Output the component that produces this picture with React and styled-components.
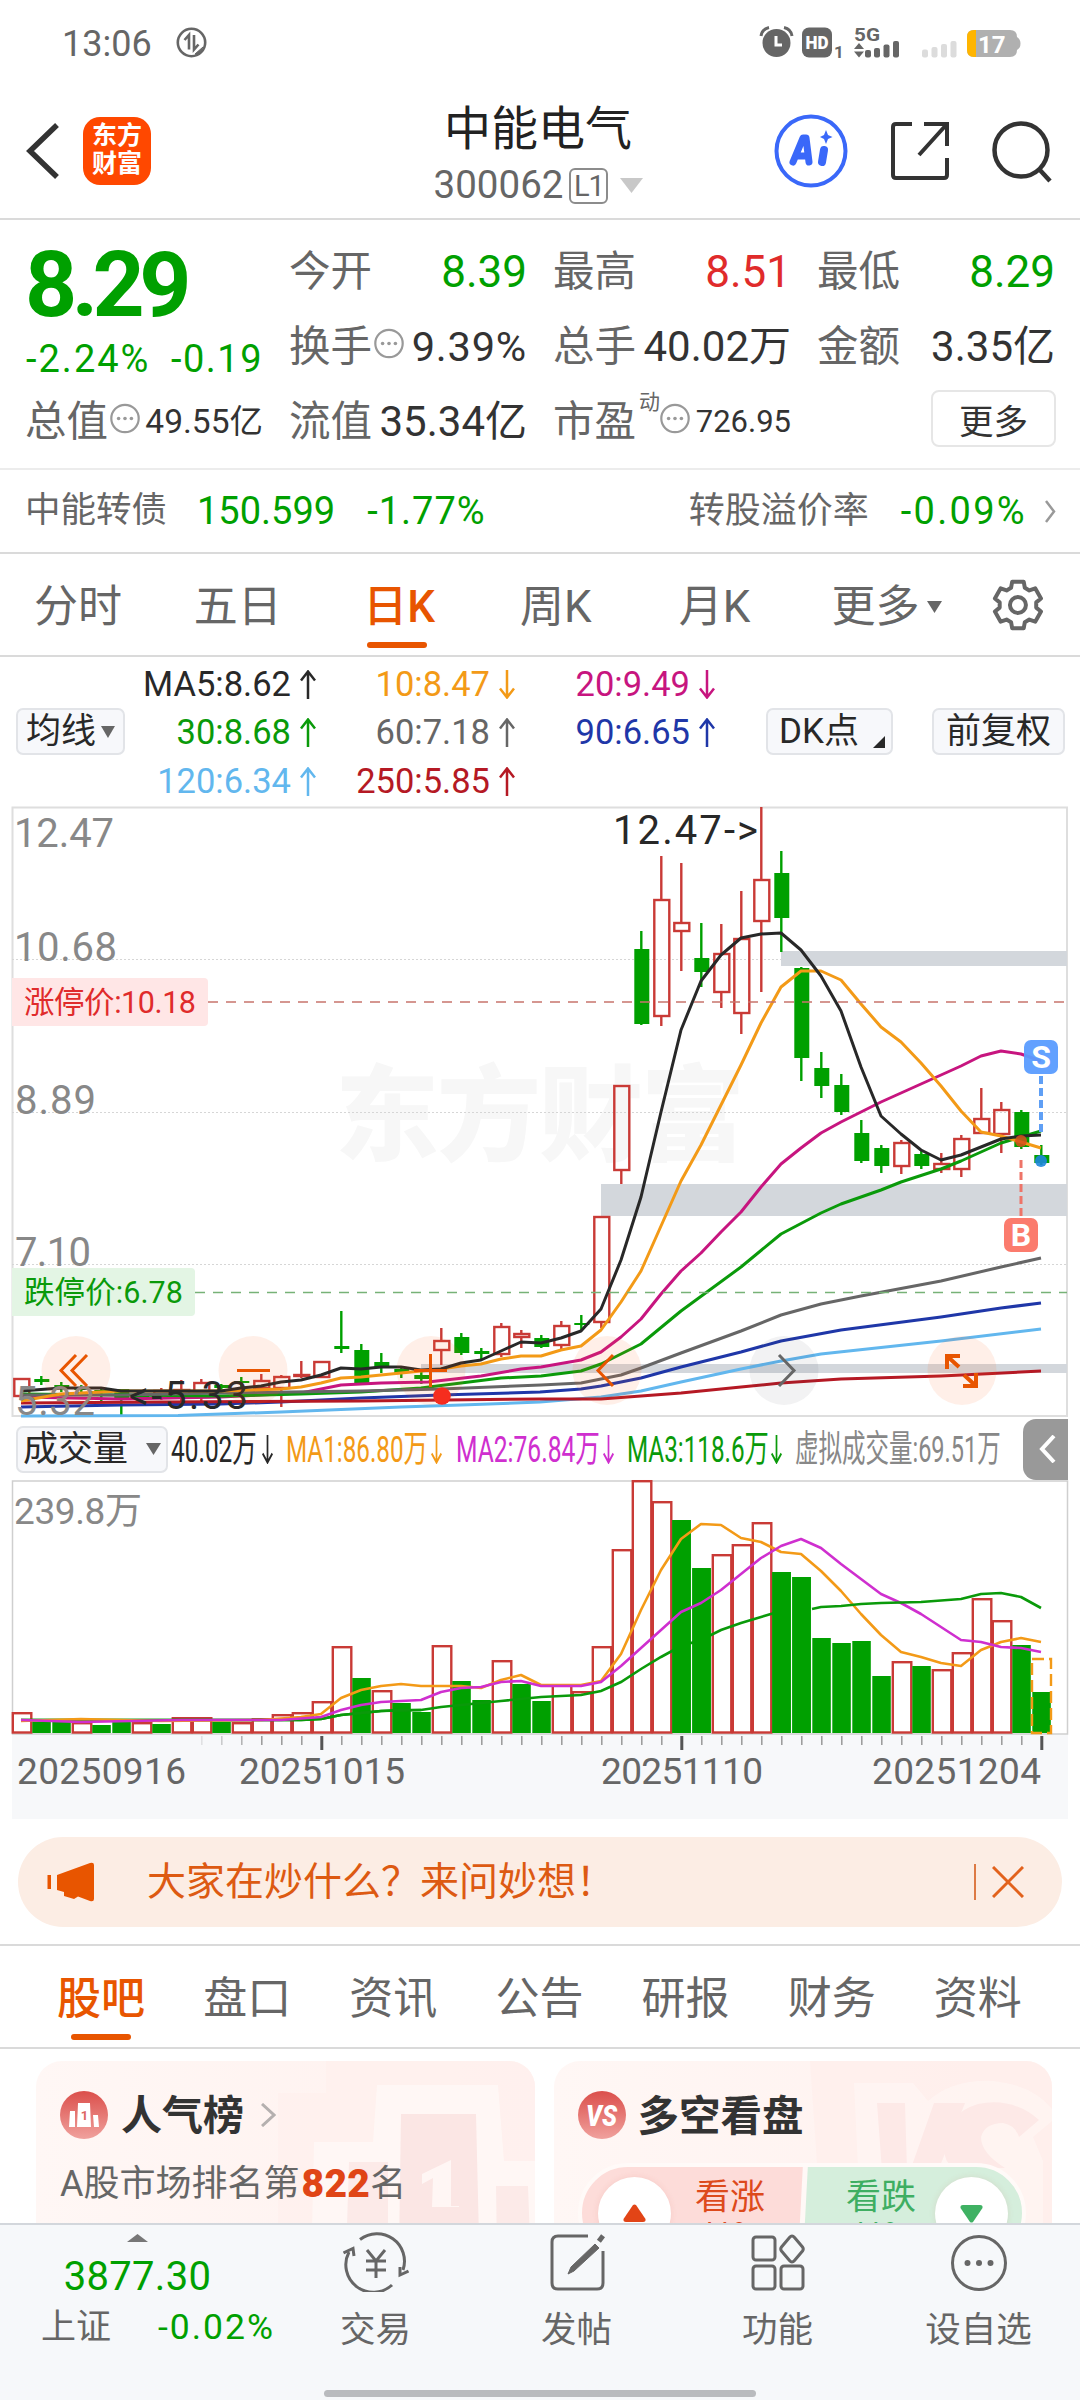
import styled, { createGlobalStyle } from "styled-components";

const GlobalStyle = createGlobalStyle`
  * { box-sizing: border-box; }
  body {
    margin: 0;
    background: #fff;
    font-family: Roboto, "Noto Sans CJK SC", sans-serif;
    line-height: 1;
    color: #333;
  }
`;

const GREEN = "#00a000";
const INK_GREEN = "#0a9a0a";
const RED = "#e02b2b";
const CANDLE_RED = "#c93a36";
const GREY = "#666";
const ORANGE = "#e85500";

const Screen = styled.div`
  width: 1080px;
  height: 2400px;
  display: flex;
  flex-direction: column;
  overflow: hidden;
  white-space: nowrap;
  background: #fff;
`;

const Txt = styled.span`
  font-size: ${(p) => p.$size}px;
  color: ${(p) => p.$color || "inherit"};
  font-weight: ${(p) => p.$weight || 400};
  letter-spacing: ${(p) => p.$ls || 0}px;
  margin: ${(p) => p.$m || 0};
`;

/* ---------- status bar ---------- */

const StatusBar = styled.div`
  height: 84px;
  padding: 0 58px 0 62px;
  display: flex;
  align-items: center;
  justify-content: space-between;
  color: #666;

  svg {
    overflow: visible;
  }
`;

const StatusLeft = styled.div`
  display: flex;
  align-items: center;
  gap: 24px;
  padding-top: 4px;

  svg {
    margin-top: -4px;
  }
`;

/* ---------- header ---------- */

const Header = styled.header`
  height: 136px;
  padding: 0 28px 0 26px;
  display: grid;
  grid-template-columns: 300px 1fr 282px;
  align-items: center;
  border-bottom: 2px solid #dadada;
`;

const HeaderLeft = styled.div`
  display: flex;
  align-items: center;
  gap: 23px;
`;

const Logo = styled.div`
  width: 68px;
  height: 68px;
  border-radius: 17px;
  background: #ff4800;
  color: #fff;
  font-size: 25px;
  font-weight: 700;
  line-height: 28px;
  text-align: center;
  padding-top: 5px;
  white-space: normal;
`;

const HeaderTitle = styled.div`
  display: flex;
  flex-direction: column;
  align-items: center;
  gap: 14px;
  padding-right: 20px;
  padding-top: 8px;
`;

const CodeRow = styled.div`
  display: flex;
  align-items: center;
  gap: 6px;
  margin-left: 1px;
  color: #666;
`;

const LevelTag = styled.span`
  width: 39px;
  height: 36px;
  border: 2px solid #8c8c8c;
  border-radius: 6px;
  font-size: 29px;
  line-height: 33px;
  text-align: center;
  letter-spacing: -1px;
`;

const HeaderRight = styled.div`
  display: flex;
  align-items: center;
  justify-content: flex-end;
  gap: 42px;
`;

/* ---------- quote ---------- */

const Quote = styled.section`
  height: 250px;
  padding: 14px 24px 0 25px;
  display: grid;
  grid-template-columns: repeat(4, 238px);
  grid-template-rows: repeat(3, 75px);
  column-gap: 26px;
  border-bottom: 2px solid #ececec;
`;

const PriceBlock = styled.div`
  grid-row: span 2;
  color: ${GREEN};
  display: flex;
  flex-direction: column;
  padding-top: 6px;
  gap: 5px;
`;

const ChangeRow = styled.div`
  display: flex;
  justify-content: space-between;
  padding: 4px 0 0 1px;
`;

const Cell = styled.div`
  display: flex;
  align-items: center;
  justify-content: space-between;
  color: ${(p) => p.$color || "#333"};
`;

const Label = styled.span`
  display: flex;
  align-items: center;
  gap: 3px;
  font-size: 41.5px;
  color: #666;

  svg {
    margin: -7px 0 0 -1px;
  }
`;

const Sup = styled.sup`
  font-size: 21px;
  align-self: flex-start;
  margin: -9px -2px 0 0;
  line-height: 1;
`;

const MoreButton = styled.button`
  justify-self: end;
  align-self: center;
  width: 125px;
  height: 57px;
  margin: -6px -1px 0 0;
  border: 2px solid #e6e6e6;
  border-radius: 8px;
  background: #fff;
  font: 34.5px Roboto, "Noto Sans CJK SC", sans-serif;
  color: #333;
  padding: 0;
`;

const BondRow = styled.div`
  height: 84px;
  padding: 0 24px 0 25px;
  display: flex;
  align-items: center;
  border-bottom: 2px solid #dadada;
  color: #666;
`;

const Spacer = styled.div`
  flex: 1;
`;

/* ---------- tabs ---------- */

const PeriodTabs = styled.nav`
  height: 103px;
  display: flex;
  align-items: center;
  padding: 0 35px 0 34px;
  border-bottom: 2px solid #dadada;
`;

const Tab = styled.div`
  position: relative;
  width: ${(p) => p.$w}px;
  padding-top: 4px;
  display: flex;
  align-items: center;
  gap: ${(p) => p.$gap || 8}px;
  font-size: 44px;
  font-weight: ${(p) => (p.$active ? 500 : 400)};
  color: ${(p) => (p.$active ? ORANGE : GREY)};

  &::after {
    content: "";
    display: ${(p) => (p.$active ? "block" : "none")};
    position: absolute;
    left: ${(p) => p.$bar || 0}px;
    bottom: -19px;
    width: 60px;
    height: 6px;
    border-radius: 3px;
    background: ${ORANGE};
  }
`;

/* ---------- moving averages ---------- */

const MaBar = styled.div`
  height: 149px;
  padding-left: 16px;
  display: flex;
  align-items: center;
`;

const Chip = styled.button`
  position: relative;
  width: ${(p) => p.$w}px;
  height: 47px;
  margin-left: ${(p) => p.$ml || 0}px;
  padding: 0 ${(p) => p.$px || 8}px;
  display: flex;
  align-items: center;
  justify-content: ${(p) => p.$justify || "center"};
  gap: 5px;
  border: 2px solid #e2e4e8;
  border-radius: 7px;
  background: #f7f8fb;
  color: #282828;
  font: 35px Roboto, "Noto Sans CJK SC", sans-serif;
  line-height: 1;
  white-space: nowrap;
`;

const Corner = styled.span`
  position: absolute;
  right: 6px;
  bottom: 5px;
  border-left: 12px solid transparent;
  border-bottom: 12px solid #282828;
`;

const MaGrid = styled.div`
  display: grid;
  grid-template-columns: 191px 199px 200px;
  grid-auto-rows: 48.5px;
  padding-top: 2px;
`;

const MaItem = styled.div`
  display: flex;
  align-items: center;
  justify-content: flex-end;
  gap: 9px;
  font-size: 34.5px;
  color: ${(p) => p.$color};

  svg {
    flex: none;
  }
`;

const Chart = styled.svg`
  display: block;
  flex: none;
  overflow: visible;
`;

const VolumeBar = styled.div`
  height: 62px;
  padding: 0 12px 0 16px;
  display: flex;
  align-items: center;
`;

const VolumeItem = styled.div`
  display: flex;
  align-items: center;
  width: ${(p) => p.$w}px;
  gap: 7px;
  color: ${(p) => p.$color};
`;

const Narrow = styled.span`
  width: ${(p) => p.$w}px;
  font-size: 37px;

  span {
    display: inline-block;
    transform: scaleX(${(p) => p.$scale});
    transform-origin: left center;
  }
`;

const Drawer = styled.button`
  width: 45px;
  height: 61px;
  border: 0;
  padding: 0 0 0 3px;
  border-radius: 13px 0 0 13px;
  background: #999;
  display: flex;
  align-items: center;
  justify-content: center;
`;

/* ---------- banner ---------- */

const BannerWrap = styled.div`
  height: 126px;
  padding: 17px 18px 0;
  border-bottom: 2px solid #dadada;
`;

const Banner = styled.div`
  height: 90px;
  border-radius: 45px;
  background: #fcede4;
  color: #dd5a12;
  display: flex;
  align-items: center;
  padding: 0 38px 0 29px;
`;

const Divider = styled.span`
  width: 2px;
  height: 36px;
  margin-right: 16px;
  background: #dd7a45;
`;

const InfoTabs = styled.nav`
  height: 103px;
  display: flex;
  align-items: center;
  padding: 1px 0 0 57px;
  border-bottom: 2px solid #dadada;
`;

/* ---------- cards ---------- */

const Cards = styled.section`
  flex: 1;
  min-height: 0;
  overflow: hidden;
  padding: 12px 28px 0 36px;
  display: flex;
  gap: 19px;
`;

const Card = styled.article`
  position: relative;
  width: 499px;
  height: 260px;
  border-radius: 26px;
  padding: 30px 24px 0;
  overflow: hidden;
  background: linear-gradient(90deg, #fff7f5, #fff1ee);
`;

const CardArt = styled.svg`
  position: absolute;
  right: 0;
  top: 0;
`;

const CardTitle = styled.div`
  position: relative;
  height: 48px;
  display: flex;
  align-items: center;
  font-size: 41px;
  font-weight: 700;
  color: #333;
`;

const RankLine = styled.div`
  position: relative;
  display: flex;
  align-items: center;
  margin-top: 25px;
  height: 40px;
  font-size: 36px;
  color: #666;
`;

const VotePill = styled.div`
  position: relative;
  width: 448px;
  height: 100px;
  margin: 24px 0 0 0;
  border: 4px solid #fffaf8;
  border-radius: 50px;
  overflow: hidden;
  display: flex;
  align-items: center;
  padding: 0 14px 0 16px;
  background: linear-gradient(93deg, #fddcd9 0 220px, #fff8f6 221px 225px, #d5eedc 226px);
`;

const VoteDot = styled.span`
  width: 73px;
  height: 73px;
  border-radius: 50%;
  background: #fff;
  display: flex;
  align-items: center;
  justify-content: center;
  box-shadow: 0 0 6px rgba(200, 90, 70, 0.12);
`;

const VoteText = styled.span`
  width: 71px;
  margin: 8px 0 0 ${(p) => p.$ml}px;
  display: flex;
  flex-direction: column;
  gap: 2px;
  font-size: 35px;
  line-height: 36px;
  text-align: center;
  color: ${(p) => p.$color};
`;

/* ---------- bottom nav ---------- */

const BottomNav = styled.footer`
  height: 177px;
  background: #f6f8fa;
  border-top: 2px solid #d3d7dc;
  display: flex;
  flex-direction: column;
  align-items: center;
  justify-content: space-between;
  padding-bottom: 3px;
`;

const NavRow = styled.div`
  width: 1080px;
  height: 130px;
  display: flex;
`;

const IndexBlock = styled.div`
  width: 275px;
  padding-top: 9px;
  display: flex;
  flex-direction: column;
  align-items: center;
  color: ${GREEN};
`;

const IndexRow = styled.div`
  width: 234px;
  margin: 13px 0 0 41px;
  align-self: flex-start;
  display: flex;
  align-items: center;
  justify-content: space-between;
`;

const NavItem = styled.div`
  width: 201px;
  padding-top: 7px;
  display: flex;
  flex-direction: column;
  align-items: center;
  gap: 21px;
  font-size: 35.5px;
  color: #666;
`;

const HomeIndicator = styled.div`
  width: 432px;
  height: 7px;
  border-radius: 4px;
  background: #b9bbbe;
`;

/* ---------- data ---------- */

const MA_LIST = [
  { text: "MA5:8.62", color: "#282828", up: true },
  { text: "10:8.47", color: "#f39a17", up: false },
  { text: "20:9.49", color: "#c7157f", up: false },
  { text: "30:8.68", color: INK_GREEN, up: true },
  { text: "60:7.18", color: "#666", up: true },
  { text: "90:6.65", color: "#1f37a8", up: true },
  { text: "120:6.34", color: "#62b7ee", up: true },
  { text: "250:5.85", color: "#b51924", up: true },
];

// [up, bodyTop, bodyBottom, high, low]
const CANDLES = [
  [1, 1379, 1396, 1379, 1396], [0, 1379, 1382, 1376, 1385], [0, 1385, 1389, 1382, 1392],
  [0, 1387, 1390, 1385, 1392], [0, 1390, 1393, 1388, 1402], [0, 1389, 1400, 1389, 1415],
  [0, 1395, 1398, 1392, 1402], [1, 1391, 1394, 1388, 1400], [1, 1390, 1396, 1380, 1402],
  [1, 1383, 1397, 1379, 1402], [0, 1385, 1388, 1384, 1390], [0, 1381, 1383, 1377, 1388],
  [1, 1381, 1388, 1374, 1390], [1, 1377, 1388, 1375, 1407], [1, 1375, 1376, 1361, 1378],
  [1, 1362, 1377, 1361, 1377], [0, 1346, 1349, 1311, 1353], [0, 1350, 1384, 1344, 1384],
  [0, 1362, 1367, 1353, 1373], [0, 1369, 1373, 1366, 1378], [0, 1375, 1379, 1371, 1384],
  [1, 1341, 1350, 1328, 1365], [0, 1337, 1353, 1333, 1355], [0, 1351, 1354, 1348, 1360],
  [1, 1327, 1354, 1323, 1357], [1, 1334, 1337, 1330, 1348], [0, 1338, 1347, 1335, 1348],
  [1, 1326, 1345, 1321, 1349], [0, 1323, 1325, 1315, 1330], [1, 1217, 1322, 1216, 1328],
  [1, 1086, 1170, 1086, 1184], [0, 949, 1024, 931, 1025], [1, 900, 1016, 856, 1026],
  [1, 923, 931, 863, 971], [0, 958, 972, 923, 987], [1, 954, 992, 924, 1008],
  [1, 939, 1013, 891, 1034], [1, 880, 921, 807, 992], [0, 873, 918, 851, 952],
  [0, 968, 1058, 967, 1081], [0, 1068, 1086, 1052, 1098], [0, 1085, 1112, 1074, 1115],
  [0, 1133, 1161, 1120, 1163], [0, 1148, 1166, 1145, 1173], [1, 1143, 1166, 1140, 1174],
  [0, 1154, 1166, 1151, 1169], [1, 1164, 1169, 1153, 1173], [1, 1139, 1169, 1135, 1177],
  [1, 1119, 1133, 1088, 1133], [1, 1110, 1134, 1102, 1153], [0, 1112, 1147, 1110, 1149],
  [0, 1155, 1163, 1145, 1165],
];

const PRICE_LINES = [
  ["#62b7ee", "21,1416 178,1415.5 281,1412 401,1407 461,1405 540,1402 601,1397 641,1391 681,1382 741,1369 781,1361 821,1354 941,1341 1041,1329"],
  ["#1f37a8", "21,1407 121,1405 221,1404 281,1402 361,1398 441,1395 540,1392 581,1389 601,1386 641,1378 681,1367 741,1352 781,1341 841,1330 941,1317 1001,1308 1041,1303"],
  ["#b51924", "21,1403 161,1402 361,1401 540,1399 601,1399 641,1396 681,1393 741,1387 781,1383 841,1379 941,1376 1041,1371"],
  ["#c7157f", "21,1397 121,1399 221,1397 301,1393 341,1385 381,1383 428,1382 481,1376 521,1369 541,1367 581,1360 601,1352 621,1337 641,1319 661,1294 681,1271 701,1253 721,1232 741,1212 761,1187 781,1164 801,1148 821,1133 841,1122 861,1112 881,1102 901,1093 921,1084 941,1075 961,1066 981,1056 1001,1051 1021,1054 1041,1061"],
  [INK_GREEN, "21,1394 221,1396 301,1394 361,1392 421,1388 461,1383 501,1378 541,1376 581,1371 601,1364 641,1344 681,1311 741,1267 781,1234 821,1213 841,1204 881,1190 901,1182 941,1169 961,1161 1001,1143 1021,1137 1041,1131"],
  ["#666", "21,1395 121,1395 221,1393 361,1391 441,1389 541,1385 581,1383 621,1375 641,1368 681,1353 741,1331 781,1315 821,1304 861,1296 941,1281 1001,1267 1041,1258"],
  ["#f39a17", "21,1401 61,1394 121,1391 221,1391 281,1389 301,1387 321,1383 341,1378 361,1377 381,1375 401,1373 421,1371 441,1369 461,1366 481,1364 501,1359 521,1356 541,1356 561,1350 581,1346 601,1330 621,1302 641,1271 661,1226 681,1181 701,1145 721,1105 741,1065 761,1023 781,987 801,971 821,971 841,980 861,1004 881,1027 901,1042 921,1063 941,1086 961,1111 981,1132 1001,1136 1021,1142 1041,1148"],
  ["#282828", "21,1391 61,1388 101,1388 121,1391 221,1391 241,1388 261,1386 281,1382 301,1380 321,1375 341,1368 361,1369 381,1367 401,1367 421,1370 441,1369 461,1363 481,1360 501,1351 521,1342 541,1343 561,1338 581,1331 601,1309 621,1260 641,1197 661,1112 681,1030 701,981 721,955 741,938 761,934 781,933 801,950 821,976 841,1011 861,1067 881,1116 901,1134 921,1150 941,1160 961,1155 981,1147 1001,1139 1021,1136 1041,1135"],
];

// [up, top]
const VOLUMES = [
  [1, 1712], [0, 1722], [0, 1722], [1, 1722], [0, 1725], [0, 1722], [1, 1722], [0, 1724],
  [1, 1717], [1, 1717], [0, 1722], [1, 1722], [1, 1718], [1, 1714], [1, 1712], [1, 1701],
  [1, 1646], [0, 1678], [1, 1690], [0, 1703], [0, 1712], [1, 1645], [0, 1681], [0, 1700],
  [1, 1660], [0, 1684], [0, 1701], [1, 1684], [1, 1691], [1, 1646], [1, 1549], [1, 1480],
  [1, 1501], [0, 1520], [0, 1568], [1, 1554], [1, 1544], [1, 1522], [0, 1572], [0, 1577],
  [0, 1638], [0, 1643], [0, 1641], [0, 1676], [1, 1661], [0, 1666], [1, 1669], [1, 1652],
  [1, 1598], [1, 1620], [0, 1645], [0, 1692],
];

const VOL_LINE_BACK = "21,1720 221,1720 301,1720 321,1719 341,1715 361,1713 381,1711 401,1710 421,1710 441,1707 461,1705 501,1701 541,1697 581,1695 601,1691 621,1682 641,1669 661,1657 681,1646 701,1640 721,1630 741,1623 761,1617 781,1611";

const VOL_LINES = [
  [INK_GREEN, "21,1720 301,1720 321,1719 341,1715 381,1711 421,1710"],
  ["#f39a17", "21,1721 81,1719 161,1721 261,1720 301,1717 321,1714 341,1698 361,1690 381,1686 401,1684 421,1686 461,1686 481,1688 501,1680 521,1675 541,1685 581,1685 601,1681 621,1654 641,1610 661,1570 681,1539 701,1524 721,1525 741,1538 761,1542 781,1552 801,1554 821,1571 841,1591 861,1614 881,1635 901,1652 921,1657 941,1663 961,1666 981,1650 1001,1642 1021,1638 1041,1642"],
  ["#cf2fcf", "21,1720 81,1722 181,1720 281,1720 321,1717 341,1710 361,1705 381,1702 401,1701 421,1700 441,1692 461,1688 481,1687 501,1682 521,1681 541,1686 581,1686 601,1682 621,1666 641,1648 661,1630 681,1612 701,1603 721,1590 741,1574 761,1558 781,1546 801,1539 821,1548 841,1564 861,1579 881,1594 901,1603 921,1614 941,1627 961,1640 981,1642 1001,1647 1021,1648 1041,1652"],
  [INK_GREEN, "812,1609 821,1607 841,1606 861,1604 881,1603 921,1602 961,1599 981,1594 1001,1593 1021,1597 1041,1608"],
];

const candleX = (i) => 21.3 + i * 20;

/* ---------- icons ---------- */

const Arrow = ({ up, w = 16 }) => (
  <svg width={w} height="29" viewBox="0 0 16 29" preserveAspectRatio="none" fill="none" stroke="currentColor" strokeWidth="2.5">
    <path d={up ? "M8 29V1.500M1 10.500L8 1.500L15 10.500" : "M8 0V27.500M1 18.500L8 27.500L15 18.500"} />
  </svg>
);

const Caret = ({ w = 15, h = 12, color = GREY }) => (
  <svg width={w} height={h} viewBox="0 0 14 11" preserveAspectRatio="none">
    <path d="M0 0H14L7 11Z" fill={color} />
  </svg>
);

const Chevron = ({ w = 11, h = 23, color = "#999", sw = 2.5, left }) => (
  <svg width={w} height={h} viewBox={`0 0 ${w} ${h}`} fill="none" stroke={color} strokeWidth={sw}>
    <path d={left ? `M${w - 2} 1L3 ${h / 2}L${w - 2} ${h - 1}` : `M1 1L${w - 2} ${h / 2}L1 ${h - 1}`} />
  </svg>
);

const Dots = () => (
  <svg width="30" height="31" viewBox="0 0 30 31">
    <circle cx="15" cy="15.5" r="13.7" fill="none" stroke="#999" strokeWidth="2.2" />
    <circle cx="8.6" cy="15.5" r="1.8" fill="#999" />
    <circle cx="15" cy="15.5" r="1.8" fill="#999" />
    <circle cx="21.4" cy="15.5" r="1.8" fill="#999" />
  </svg>
);

const StatusIcons = () => (
  <svg width="264" height="34" viewBox="757 25 264 34">
    <g fill="#666">
      <circle cx="775.5" cy="43" r="14" />
      <path d="M760 36Q761 29 768 27.500M791 36Q790 29 783 27.500" stroke="#666" strokeWidth="3" fill="none" />
      <path d="M775 36V45H781" stroke="#fff" strokeWidth="3" fill="none" />
      <rect x="801" y="27.500" width="30" height="30" rx="7" />
      <text x="816" y="49" textAnchor="middle" fontSize="19" fontWeight="900" fill="#fff" textLength="23" lengthAdjust="spacingAndGlyphs">HD</text>
      <text x="833" y="57.500" fontSize="17" fontWeight="700">1</text>
      <text x="853" y="41" fontSize="19" fontWeight="700" textLength="26" lengthAdjust="spacingAndGlyphs">5G</text>
      <path d="M858 43L863 49H853ZM858 57.500L863 51.500H853Z" />
      <rect x="864" y="50" width="6" height="7.500" rx="2" />
      <rect x="873" y="48" width="6" height="9.500" rx="2" />
      <rect x="882.500" y="44.500" width="6" height="13" rx="2" />
      <rect x="892" y="41" width="6" height="16.500" rx="2" />
    </g>
    <g fill="#dcdcdc">
      <rect x="921" y="49.500" width="6" height="8" rx="2" />
      <rect x="930.500" y="47" width="6" height="10.500" rx="2" />
      <rect x="940" y="44" width="6" height="13.500" rx="2" />
      <rect x="949.500" y="41" width="6" height="16.500" rx="2" />
    </g>
    <path d="M973 30H1009Q1016 30 1016 37Q1019.500 39 1019.500 43.500Q1019.500 48 1016 50Q1016 57 1009 57H973Q966 57 966 50V37Q966 30 973 30Z" fill="#b0b0b0" />
    <path d="M975 30H973Q966 30 966 37V50Q966 57 973 57H975Z" fill="#ffb500" />
    <text x="977" y="53" fontSize="24" fontWeight="700" fill="#fff">17</text>
  </svg>
);

const NfcIcon = () => (
  <svg width="31" height="31" viewBox="0 0 31 31" fill="none" stroke="#666">
    <circle cx="15.500" cy="15.500" r="13.700" strokeWidth="2.600" />
    <path d="M8.500 13L13 8V22.500M18 8V22.500L22.500 17.500" strokeWidth="2.600" />
    <path d="M19 27L27 20L22 28Z" fill="#666" strokeWidth="1" />
  </svg>
);

const AiIcon = () => (
  <svg width="74" height="74" viewBox="0 0 74 74">
    <circle cx="37" cy="37" r="34.500" fill="#fff" stroke="#3a68f9" strokeWidth="4" />
    <g fill="none" stroke="#3a68f9" strokeLinecap="round" strokeLinejoin="round">
      <path d="M19 48L29 24H32L35 48M23 42H34" strokeWidth="7" />
      <path d="M50 36L48 48" strokeWidth="8" />
    </g>
    <path d="M52 16L54 21L58.500 23L54 25L52 30L50 25L46 23L50 21Z" fill="#3a68f9" />
  </svg>
);

const ShareIcon = () => (
  <svg width="60" height="60" viewBox="0 0 60 60" fill="none" stroke="#333" strokeWidth="4">
    <path d="M22 3H6Q3 3 3 6V54Q3 57 6 57H54Q57 57 57 54V37" />
    <path d="M34 3H57V25M57 3L29 34" />
  </svg>
);

const SearchIcon = () => (
  <svg width="60" height="68" viewBox="0 0 60 68" fill="none" stroke="#333" strokeWidth="4.500">
    <circle cx="29" cy="33" r="26.500" />
    <path d="M47 52L58 64" />
  </svg>
);

const gearPath = () => {
  const pts = [];
  for (let k = 0; k < 6; k++) {
    const base = -90 + k * 60;
    [[-22, 18.5], [-14, 24], [14, 24], [22, 18.5]].forEach(([d, r]) => {
      const a = ((base + d) * Math.PI) / 180;
      pts.push(`${(27 + r * Math.cos(a)).toFixed(1)} ${(27 + r * Math.sin(a)).toFixed(1)}`);
    });
  }
  return `M${pts.join("L")}Z`;
};

const GearIcon = () => (
  <svg width="54" height="54" viewBox="0 0 54 54" fill="none" stroke="#666" strokeWidth="4" strokeLinejoin="round">
    <path d={gearPath()} />
    <circle cx="27" cy="27" r="8" />
  </svg>
);

const Megaphone = () => (
  <svg width="48" height="40" viewBox="0 0 48 40" fill={ORANGE}>
    <path d="M0.500 13H4V27H0.500ZM10 13L43 1Q47 0 47 3V37Q47 40 43 39L31 34.500L27 37L17 34V30L10 28Z" />
  </svg>
);

const CloseIcon = () => (
  <svg width="32" height="32" viewBox="0 0 32 32" stroke="#e2621c" strokeWidth="3">
    <path d="M1 1L31 31M31 1L1 31" />
  </svg>
);

const TradeIcon = () => (
  <svg width="66" height="60" viewBox="0 0 66 60" fill="none" stroke="#666" strokeWidth="3">
    <path d="M17 7.500A27.500 27.500 0 0 1 60 38M49 53A27.500 27.500 0 0 1 6 20" />
    <path d="M0.500 21L10 16.500L11 24M65.500 39L57 43V35" />
    <path d="M24 18L33 29L42 18M33 29V46M23 29H43M23 38H43" />
  </svg>
);

const PostIcon = () => (
  <svg width="56" height="60" viewBox="0 0 56 60" fill="none" stroke="#666" strokeWidth="3">
    <path d="M39 4H9Q3 4 3 10V51Q3 57 9 57H48Q54 57 54 51V19" />
    <path d="M50 5L54 8" strokeWidth="7" />
    <path d="M46 12L50 16L25 39L19 42L22 35Z" fill="#666" strokeWidth="1" />
  </svg>
);

const AppsIcon = () => (
  <svg width="54" height="60" viewBox="0 0 54 60" fill="none" stroke="#666" strokeWidth="3">
    <rect x="2" y="5" width="22" height="23" rx="3" />
    <rect x="2" y="34" width="22" height="23" rx="3" />
    <rect x="30" y="34" width="22" height="23" rx="3" />
    <path d="M38.500 5.500Q41 2.500 43.500 5.500L51.500 15Q53 17 51.500 19L43.500 28.500Q41 31.500 38.500 28.500L30.500 19Q29 17 30.500 15Z" />
  </svg>
);

const MoreIcon = () => (
  <svg width="60" height="60" viewBox="0 0 60 60" fill="#666">
    <circle cx="30" cy="31" r="26.500" fill="none" stroke="#666" strokeWidth="3" />
    <circle cx="18.500" cy="31" r="3" />
    <circle cx="30" cy="31" r="3" />
    <circle cx="41.500" cy="31" r="3" />
  </svg>
);

const RoundBadge = ({ children, id }) => (
  <svg width="48" height="48" viewBox="0 0 48 48">
    <defs>
      <linearGradient id={id} x1="0" y1="0" x2="0" y2="1">
        <stop offset="0" stopColor="#db4f4b" />
        <stop offset="1" stopColor="#f0a19d" />
      </linearGradient>
    </defs>
    <circle cx="24" cy="24" r="24" fill={`url(#${id})`} />
    {children}
  </svg>
);

/* ---------- charts ---------- */

const ToolCircle = ({ x, grey, children }) => (
  <g fill="none" stroke={grey ? "#666" : ORANGE} strokeWidth="3">
    <circle cx={x} cy="1370.500" r="34.500" fill={grey ? "rgba(60,60,70,0.065)" : "rgba(255,100,30,0.1)"} stroke="none" />
    {children}
  </g>
);

const PriceChart = () => (
  <Chart width="1080" height="612" viewBox="0 806 1080 612">
    <text x="335" y="1153" fontSize="104" fontWeight="900" fill="#f7f7f7" textLength="410">东方财富</text>
    <path d="M12.500 1416V807.500H1067V1416Z" fill="none" stroke="#dedede" strokeWidth="2" />
    <g stroke="#d6d6d6" strokeDasharray="2 2">
      <path d="M12 959.500H1067M12 1112.500H1067M12 1264.500H1067" />
    </g>
    <g fill="#d3d7dc">
      <rect x="781" y="951" width="286" height="15" />
      <rect x="601" y="1184" width="466" height="32" />
      <rect x="421" y="1364" width="646" height="9" />
    </g>
    {CANDLES.map(([up, top, bottom, high, low], i) => {
      const x = candleX(i);
      return up ? (
        <g key={i} stroke={CANDLE_RED} strokeWidth="2.400" fill="none">
          <path d={`M${x} ${high}V${top}M${x} ${bottom}V${low}`} />
          <rect x={x - 7} y={top} width="15" height={bottom - top} />
        </g>
      ) : (
        <g key={i} fill={GREEN}>
          <rect x={x - 1.2} y={high} width="2.400" height={low - high} />
          <rect x={x - 7} y={top} width="15" height={bottom - top} />
        </g>
      );
    })}
    {PRICE_LINES.map(([color, points]) => (
      <polyline key={color} points={points} fill="none" stroke={color} strokeWidth="3" strokeLinejoin="round" />
    ))}
    <path d="M208 1002H1067" stroke="#c8746c" strokeWidth="1.500" strokeDasharray="10 8" />
    <path d="M195 1292.500H1067" stroke="#77b277" strokeWidth="1.500" strokeDasharray="10 8" />
    <g fontSize="40" fill="#888">
      <text x="14" y="847" textLength="100">12.47</text>
      <text x="14" y="961" textLength="103">10.68</text>
      <text x="15" y="1114" textLength="81">8.89</text>
      <text x="15" y="1266" textLength="76">7.10</text>
      <text x="15" y="1415" textLength="80">5.32</text>
    </g>
    <path d="M12 978H204Q208 978 208 982V1022Q208 1026 204 1026H12Z" fill="#ffe6e6" />
    <text x="24" y="1013" fontSize="30.500" fill={RED} textLength="172">涨停价:10.18</text>
    <path d="M12 1268H191Q195 1268 195 1272V1312Q195 1316 191 1316H12Z" fill="#e3f5e4" />
    <text x="24" y="1303" fontSize="30.500" fill={INK_GREEN} textLength="159">跌停价:6.78</text>
    <text x="613" y="844" fontSize="40" fill="#282828" textLength="145">{"12.47->"}</text>
    <text x="129" y="1409" fontSize="39" fill="#282828" textLength="119">{"<-5.33"}</text>
    <circle cx="442" cy="1396" r="8.800" fill="#f5281f" />

    <ToolCircle x={76}><path d="M76 1355L61 1370.500L76 1386M87 1355L72 1370.500L87 1386" /></ToolCircle>
    <ToolCircle x={253}><path d="M237 1370.500H270" /></ToolCircle>
    <ToolCircle x={431}><path d="M414 1370.500H447M430.500 1354V1387" /></ToolCircle>
    <ToolCircle x={607}><path d="M613 1355L598 1370.500L613 1386" /></ToolCircle>
    <ToolCircle x={784} grey><path d="M779 1355L794 1370.500L779 1386" /></ToolCircle>
    <ToolCircle x={962}>
      <path d="M960 1356H947V1369M947 1356L959 1367M963 1386H976V1373M976 1386L964 1375" strokeWidth="4" />
    </ToolCircle>

    <path d="M1041 1076V1132" stroke="#5f9ff5" strokeWidth="4" strokeDasharray="8 4" />
    <path d="M1021 1160V1216" stroke="#ee7468" strokeWidth="3" strokeDasharray="8 4" />
    <circle cx="1021" cy="1141" r="6" fill="#d9501c" opacity="0.850" />
    <circle cx="1041" cy="1161" r="6" fill="#1d86dc" opacity="0.900" />
    <rect x="1024" y="1040" width="34" height="34" rx="7" fill="#5a9cff" opacity="0.950" />
    <text x="1041" y="1068" textAnchor="middle" fontSize="32" fontWeight="700" fill="#fff">S</text>
    <rect x="1004" y="1218" width="34" height="34" rx="7" fill="#fb7b6d" />
    <text x="1021" y="1246" textAnchor="middle" fontSize="32" fontWeight="700" fill="#fff">B</text>
  </Chart>
);

const VolumeChart = () => (
  <Chart width="1080" height="340" viewBox="0 1480 1080 340">
    <rect x="12" y="1734" width="1056" height="85" fill="#f7f8fa" />
    <path d="M12.500 1734V1481H1067.500V1734Z" fill="#fff" stroke="#cfcfcf" strokeWidth="1.500" />
    <text x="14" y="1524" fontSize="37" fill="#888" textLength="128">239.8万</text>
    {VOLUMES.map(([up, top], i) => {
      const x = candleX(i) - 9;
      return up ? (
        <rect key={i} x={x + 0.5} y={top + 1.2} width="18.500" height={1731.300 - top} fill="#fff" stroke={CANDLE_RED} strokeWidth="2.400" />
      ) : (
        <rect key={i} x={x} y={top} width="18.500" height={1733 - top} fill={GREEN} />
      );
    })}
    <polyline points={VOL_LINE_BACK} fill="none" stroke={INK_GREEN} strokeWidth="2.600" />
    {VOLUMES.map(([up, top], i) =>
      !up && i > 32 && i < 40 ? (
        <rect key={i} x={candleX(i) - 9} y={top} width="18.500" height={1733 - top} fill={GREEN} />
      ) : null
    )}
    <rect x="1032" y="1659" width="19" height="74" fill="none" stroke="#f39a17" strokeWidth="2.400" strokeDasharray="12 5" />
    {VOL_LINES.map(([color, points], i) => (
      <polyline key={i} points={points} fill="none" stroke={color} strokeWidth="2.600" strokeLinejoin="round" />
    ))}
    {CANDLES.map((_, i) => {
      if (i < 9) return null;
      const major = i === 15 || i === 33 || i === 51;
      return (
        <path
          key={i}
          d={`M${candleX(i) + 0.5} 1736V${major ? 1750 : 1745}`}
          stroke={major ? "#555" : "#999"}
          strokeWidth={major ? 3 : 1.5}
          opacity={i < 12 ? (i - 8) / 4 : 1}
        />
      );
    })}
    <g fontSize="37" fill="#666">
      <text x="17" y="1784" textLength="169">20250916</text>
      <text x="239" y="1784" textLength="166">20251015</text>
      <text x="601" y="1784" textLength="162">20251110</text>
      <text x="872" y="1784" textLength="169">20251204</text>
    </g>
  </Chart>
);

/* ---------- page ---------- */

const VOLUME_LEGEND = [
  { text: "40.02万", color: "#282828", w: 84, scale: 0.66, box: 115 },
  { text: "MA1:86.80万", color: "#f39a17", w: 138, scale: 0.655, box: 170 },
  { text: "MA2:76.84万", color: "#cf2fcf", w: 140, scale: 0.665, box: 171 },
  { text: "MA3:118.6万", color: INK_GREEN, w: 137, scale: 0.655, box: 168 },
];

const INFO_TABS = ["股吧", "盘口", "资讯", "公告", "研报", "财务", "资料"];

const NAV = [
  ["交易", TradeIcon],
  ["发帖", PostIcon],
  ["功能", AppsIcon],
  ["设自选", MoreIcon],
];

const App = () => (
  <Screen>
    <GlobalStyle />
    <StatusBar>
      <StatusLeft>
        <Txt $size={36}>13:06</Txt>
        <NfcIcon />
      </StatusLeft>
      <StatusIcons />
    </StatusBar>

    <Header>
      <HeaderLeft>
        <svg width="34" height="56" viewBox="0 0 34 56" fill="none" stroke="#333" strokeWidth="5.500">
          <path d="M31 2L4 28L31 54" />
        </svg>
        <Logo>东方<br />财富</Logo>
      </HeaderLeft>
      <HeaderTitle>
        <Txt $size={47} $color="#222">中能电气</Txt>
        <CodeRow>
          <Txt $size={38.5}>300062</Txt>
          <LevelTag>L1</LevelTag>
          <Txt $size={4} />
          <Caret w={23} h={15} color="#c8c8c8" />
        </CodeRow>
      </HeaderTitle>
      <HeaderRight>
        <AiIcon />
        <ShareIcon />
        <SearchIcon />
      </HeaderRight>
    </Header>

    <Quote>
      <PriceBlock>
        <Txt $size={91} $weight={700} $ls={-5.5}>8.29</Txt>
        <ChangeRow>
          <Txt $size={38} $ls={2}>-2.24%</Txt>
          <Txt $size={38} $ls={1.5}>-0.19</Txt>
        </ChangeRow>
      </PriceBlock>
      <Cell $color={GREEN}><Label>今开</Label><Txt $size={44}>8.39</Txt></Cell>
      <Cell $color={RED}><Label>最高</Label><Txt $size={44}>8.51</Txt></Cell>
      <Cell $color={GREEN}><Label>最低</Label><Txt $size={44}>8.29</Txt></Cell>
      <Cell><Label>换手<Dots /></Label><Txt $size={41.5} $ls={0.8}>9.39%</Txt></Cell>
      <Cell><Label>总手</Label><Txt $size={42}>40.02万</Txt></Cell>
      <Cell><Label>金额</Label><Txt $size={42}>3.35亿</Txt></Cell>
      <Cell><Label>总值<Dots /></Label><Txt $size={33.5}>49.55亿</Txt></Cell>
      <Cell><Label>流值</Label><Txt $size={42}>35.34亿</Txt></Cell>
      <Cell><Label>市盈<Sup>动</Sup><Dots /></Label><Txt $size={31}>726.95</Txt></Cell>
      <MoreButton>更多</MoreButton>
    </Quote>

    <BondRow>
      <Txt $size={35.5}>中能转债</Txt>
      <Txt $size={38} $color={GREEN} $m="0 0 0 30px">150.599</Txt>
      <Txt $size={38} $ls={1} $color={GREEN} $m="0 0 0 32px">-1.77%</Txt>
      <Spacer />
      <Txt $size={36}>转股溢价率</Txt>
      <Txt $size={38} $ls={2.3} $color={GREEN} $m="0 18px 0 32px">-0.09%</Txt>
      <Chevron />
    </BondRow>

    <PeriodTabs>
      <Tab $w={160}>分时</Tab>
      <Tab $w={170}>五日</Tab>
      <Tab $w={157} $active $bar={4}>日K</Tab>
      <Tab $w={159}>周K</Tab>
      <Tab $w={153}>月K</Tab>
      <Tab $w={160}>更多<Caret /></Tab>
      <GearIcon />
    </PeriodTabs>

    <MaBar>
      <Chip $w={109}>均线<Caret /></Chip>
      <MaGrid>
        {MA_LIST.map((m) => (
          <MaItem key={m.text} $color={m.color}>
            {m.text}
            <Arrow up={m.up} />
          </MaItem>
        ))}
      </MaGrid>
      <Chip $w={127} $ml={51} $justify="flex-start"><Txt $size={35} $m="0 0 0 3px">DK点</Txt><Corner /></Chip>
      <Chip $w={133} $ml={39}>前复权</Chip>
    </MaBar>

    <PriceChart />

    <VolumeBar>
      <Chip $w={152} $px={5} $justify="space-between">成交量<Caret /></Chip>
      <Spacer />
      {VOLUME_LEGEND.map((v) => (
        <VolumeItem key={v.text} $color={v.color} $w={v.box}>
          <Narrow $w={v.w} $scale={v.scale}><span>{v.text}</span></Narrow>
          <Arrow w={11} />
        </VolumeItem>
      ))}
      <VolumeItem $color="#888" $w={228}>
        <Narrow $w={202} $scale={0.635}><span>虚拟成交量:69.51万</span></Narrow>
      </VolumeItem>
      <Drawer><Chevron left w={17} h={28} color="#fff" sw={4} /></Drawer>
    </VolumeBar>

    <VolumeChart />

    <BannerWrap>
      <Banner>
        <Megaphone />
        <Txt $size={39} $m="0 0 0 52px">大家在炒什么？来问妙想！</Txt>
        <Spacer />
        <Divider />
        <CloseIcon />
      </Banner>
    </BannerWrap>

    <InfoTabs>
      {INFO_TABS.map((t, i) => (
        <Tab key={t} $w={146.2} $active={i === 0} $bar={14}>{t}</Tab>
      ))}
    </InfoTabs>

    <Cards>
      <Card>
        <CardArt width="499" height="260" viewBox="0 0 499 260">
          <path d="M290 0H499V260H242V32H290Z" fill="#fff0ed" opacity="0.800" />
          <path d="M278 81H337L341 24H462L468 100H499V260H274Z" fill="#fff8f6" opacity="0.850" />
          <path d="M313 101H352V260H308ZM460 125H492L497 260H462Z" fill="#fceae8" />
          <path d="M365 53H440L445 260H362Z" fill="#fbe6e4" />
          <path d="M386 113L415 99V145H423V146H396L397 117L386 123Z" fill="#fff6f4" />
        </CardArt>
        <CardTitle>
          <RoundBadge id="rank">
            <path d="M10 20H15V36H9ZM18 12H30L31 36H17ZM33 24H38L39 36H34Z" fill="#fff" />
            <text x="24.500" y="29" textAnchor="middle" fontSize="13" fontWeight="700" fill="#dd6562">1</text>
          </RoundBadge>
          <Txt $size={41} $weight={700} $m="3px 17px 0 13px">人气榜</Txt>
          <Chevron w={15} h={24} color="#b5b0af" sw={3} />
        </CardTitle>
        <RankLine>
          A股市场排名第<Txt $size={39} $weight={900} $ls={0.3} $m="0 0 0 2px" $color="#e04516">822</Txt>名
        </RankLine>
      </Card>
      <Card>
        <CardArt width="499" height="260" viewBox="0 0 499 260">
          <path d="M257 0H499V260H275Z" fill="#ffeeeb" opacity="0.700" />
          <path d="M301 22H360L375 40Q400 18 440 20Q480 24 499 48V60L480 76L490 100V260H312Z" fill="#fff5f3" opacity="0.800" />
          <path d="M324 42H352L354 110H357L381 42H412L385 110H329Z" fill="#fde9e7" />
          <path d="M486 59Q460 36 425 43Q396 52 392 78Q388 98 400 107H452Q428 92 428 76Q432 62 450 62Q462 64 466 76Z" fill="#fde9e7" />
        </CardArt>
        <CardTitle>
          <RoundBadge id="versus">
            <text x="23.500" y="35" textAnchor="middle" fontSize="30" fontWeight="900" fontStyle="italic" fill="#fff" textLength="31" lengthAdjust="spacingAndGlyphs">VS</text>
          </RoundBadge>
          <Txt $size={41.5} $weight={700} $m="3px 0 0 12px">多空看盘</Txt>
        </CardTitle>
        <VotePill>
          <VoteDot>
            <svg width="23" height="19" viewBox="0 0 23 19"><path d="M10 1Q11.500 0 13 1L22.500 15Q23 18 20 18H3Q0 18 0.500 15Z" fill="#e24416" /></svg>
          </VoteDot>
          <VoteText $ml={24} $color="#dd4a1c">看涨<span>**%</span></VoteText>
          <VoteText $ml={80} $color="#3fae62">看跌<span>**%</span></VoteText>
          <Spacer />
          <VoteDot>
            <svg width="23" height="19" viewBox="0 0 23 19"><path d="M10 18Q11.500 19 13 18L22.500 4Q23 1 20 1H3Q0 1 0.500 4Z" fill="#3fb163" /></svg>
          </VoteDot>
        </VotePill>
      </Card>
    </Cards>

    <BottomNav>
      <NavRow>
        <IndexBlock>
          <svg width="21" height="8" viewBox="0 0 21 8"><path d="M0 8L10.500 0L21 8Z" fill="#777" /></svg>
          <Txt $size={40} $ls={0.3} $m="15px 0 0">3877.30</Txt>
          <IndexRow>
            <Txt $size={35} $color={GREY}>上证</Txt>
            <Txt $size={35.5} $ls={2}>-0.02%</Txt>
          </IndexRow>
        </IndexBlock>
        {NAV.map(([label, Icon]) => (
          <NavItem key={label}>
            <Icon />
            {label}
          </NavItem>
        ))}
      </NavRow>
      <HomeIndicator />
    </BottomNav>
  </Screen>
);

export default App;
